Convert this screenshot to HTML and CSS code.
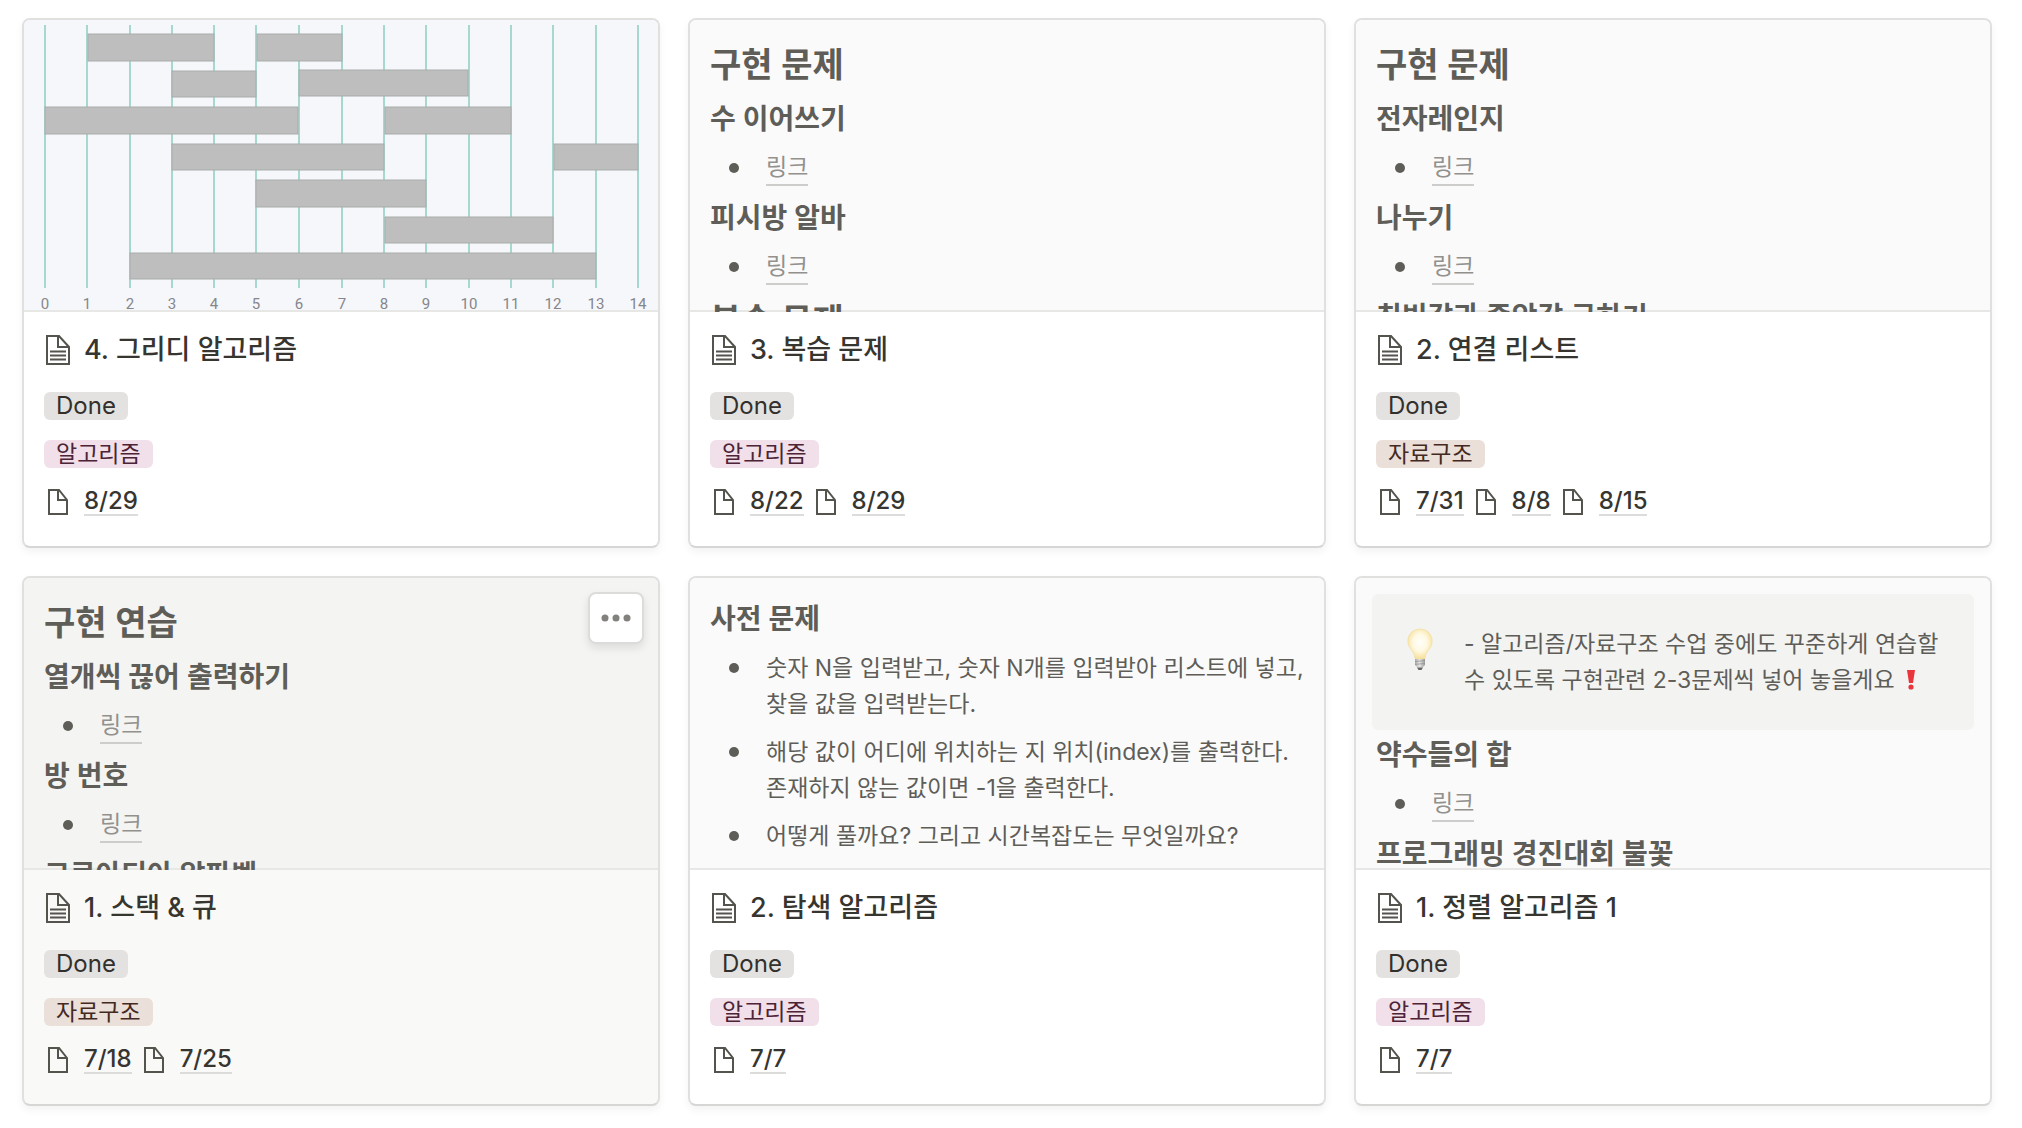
FILE: index.html
```
<!DOCTYPE html>
<html lang="ko">
<head>
    <meta charset="utf-8">
    <title>알고리즘 스터디</title>
    <link rel="stylesheet" href="styles.css">
</head>
<body>
    <!-- Shared icons -->
    <svg class="sprite" aria-hidden="true">
        <symbol id="icon-doc" viewBox="0 0 28 32">
            <path d="M3 2h12l10 11v17H3z M14 2v11h11" fill="none" stroke="#55534e" stroke-width="2"/>
            <path d="M6 17.500h16M6 21.500h16M6 25.500h16" stroke="#55534e" stroke-width="2"/>
        </symbol>
        <symbol id="icon-page" viewBox="0 0 28 28">
            <path d="M5 2h10l8 10v14H5z M14 2v10h9" fill="none" stroke="#55534e" stroke-width="2"/>
        </symbol>
    </svg>

    <main class="gallery">
        <!-- Greedy -->
        <article class="card">
            <div class="cover cover-image">
                <svg class="chart" viewBox="0 0 634 290" preserveAspectRatio="xMidYMin slice" role="img" aria-label="회의 시간표">
                    <g class="chart-lines">
                        <path d="M21 5v263M63 5v263M106 5v263M148 5v263M190 5v263M232 5v263M275 5v263M318 5v263M360 5v263M402 5v263M445 5v263M487 5v263M529 5v263M572 5v263M614 5v263"/>
                    </g>
                    <g class="chart-bars">
                        <rect x="64" y="14" width="126" height="27"/>
                        <rect x="233" y="14" width="85" height="27"/>
                        <rect x="148" y="51" width="84" height="26"/>
                        <rect x="275" y="50" width="169" height="26"/>
                        <rect x="21" y="87" width="253" height="27"/>
                        <rect x="361" y="87" width="126" height="27"/>
                        <rect x="148" y="124" width="212" height="26"/>
                        <rect x="530" y="124" width="84" height="26"/>
                        <rect x="232" y="160" width="170" height="27"/>
                        <rect x="361" y="197" width="168" height="26"/>
                        <rect x="106" y="233" width="466" height="26"/>
                    </g>
                    <g class="chart-labels">
                        <text x="21" y="289">0</text>
                        <text x="63" y="289">1</text>
                        <text x="106" y="289">2</text>
                        <text x="148" y="289">3</text>
                        <text x="190" y="289">4</text>
                        <text x="232" y="289">5</text>
                        <text x="275" y="289">6</text>
                        <text x="318" y="289">7</text>
                        <text x="360" y="289">8</text>
                        <text x="402" y="289">9</text>
                        <text x="445" y="289">10</text>
                        <text x="487" y="289">11</text>
                        <text x="529" y="289">12</text>
                        <text x="572" y="289">13</text>
                        <text x="614" y="289">14</text>
                    </g>
                </svg>
            </div>
            <div class="card-body">
                <div class="title"><svg class="icon-doc"><use href="#icon-doc"/></svg>4. 그리디 알고리즘</div>
                <span class="tag done">Done</span>
                <span class="tag pink">알고리즘</span>
                <div class="pages">
                    <svg class="icon-page"><use href="#icon-page"/></svg><a href="#">8/29</a>
                </div>
            </div>
        </article>

        <!-- Review -->
        <article class="card">
            <div class="cover">
                <h2>구현 문제</h2>
                <h3>수 이어쓰기</h3>
                <ul><li><a href="#">링크</a></li></ul>
                <h3>피시방 알바</h3>
                <ul><li><a href="#">링크</a></li></ul>
                <h2>복습 문제</h2>
            </div>
            <div class="card-body">
                <div class="title"><svg class="icon-doc"><use href="#icon-doc"/></svg>3. 복습 문제</div>
                <span class="tag done">Done</span>
                <span class="tag pink">알고리즘</span>
                <div class="pages">
                    <svg class="icon-page"><use href="#icon-page"/></svg><a href="#">8/22</a>
                    <svg class="icon-page"><use href="#icon-page"/></svg><a href="#">8/29</a>
                </div>
            </div>
        </article>

        <!-- Linked list -->
        <article class="card">
            <div class="cover">
                <h2>구현 문제</h2>
                <h3>전자레인지</h3>
                <ul><li><a href="#">링크</a></li></ul>
                <h3>나누기</h3>
                <ul><li><a href="#">링크</a></li></ul>
                <h3>최빈값과 중앙값 구하기</h3>
            </div>
            <div class="card-body">
                <div class="title"><svg class="icon-doc"><use href="#icon-doc"/></svg>2. 연결 리스트</div>
                <span class="tag done">Done</span>
                <span class="tag brown">자료구조</span>
                <div class="pages">
                    <svg class="icon-page"><use href="#icon-page"/></svg><a href="#">7/31</a>
                    <svg class="icon-page"><use href="#icon-page"/></svg><a href="#">8/8</a>
                    <svg class="icon-page"><use href="#icon-page"/></svg><a href="#">8/15</a>
                </div>
            </div>
        </article>

        <!-- Stack and queue, shown in its hovered state -->
        <article class="card active">
            <button class="more" type="button" aria-label="더 보기">
                <svg viewBox="0 0 30 8" width="30" height="8"><circle cx="4" cy="4" r="3.500"/><circle cx="15" cy="4" r="3.500"/><circle cx="26" cy="4" r="3.500"/></svg>
            </button>
            <div class="cover">
                <h2>구현 연습</h2>
                <h3>열개씩 끊어 출력하기</h3>
                <ul><li><a href="#">링크</a></li></ul>
                <h3>방 번호</h3>
                <ul><li><a href="#">링크</a></li></ul>
                <h3>크로아티아 알파벳</h3>
            </div>
            <div class="card-body">
                <div class="title"><svg class="icon-doc"><use href="#icon-doc"/></svg>1. 스택 &amp; 큐</div>
                <span class="tag done">Done</span>
                <span class="tag brown">자료구조</span>
                <div class="pages">
                    <svg class="icon-page"><use href="#icon-page"/></svg><a href="#">7/18</a>
                    <svg class="icon-page"><use href="#icon-page"/></svg><a href="#">7/25</a>
                </div>
            </div>
        </article>

        <!-- Search -->
        <article class="card">
            <div class="cover">
                <h3>사전 문제</h3>
                <ul>
                    <li>숫자 N을 입력받고, 숫자 N개를 입력받아 리스트에 넣고, 찾을 값을 입력받는다.</li>
                    <li>해당 값이 어디에 위치하는 지 위치(index)를 출력한다. 존재하지 않는 값이면 -1을 출력한다.</li>
                    <li>어떻게 풀까요? 그리고 시간복잡도는 무엇일까요?</li>
                </ul>
            </div>
            <div class="card-body">
                <div class="title"><svg class="icon-doc"><use href="#icon-doc"/></svg>2. 탐색 알고리즘</div>
                <span class="tag done">Done</span>
                <span class="tag pink">알고리즘</span>
                <div class="pages">
                    <svg class="icon-page"><use href="#icon-page"/></svg><a href="#">7/7</a>
                </div>
            </div>
        </article>

        <!-- Sorting -->
        <article class="card">
            <div class="cover">
                <div class="callout">
                    <svg class="bulb" viewBox="0 0 28 44" aria-hidden="true">
                        <defs>
                            <radialGradient id="glow" cx="50%" cy="45%" r="58%">
                                <stop offset="0" stop-color="#fffefa"/>
                                <stop offset="0.5" stop-color="#fff9e2"/>
                                <stop offset="1" stop-color="#f5dc90"/>
                            </radialGradient>
                            <linearGradient id="metal">
                                <stop offset="0" stop-color="#a9a9a7"/>
                                <stop offset="0.45" stop-color="#e6e6e4"/>
                                <stop offset="1" stop-color="#9b9b99"/>
                            </linearGradient>
                        </defs>
                        <path d="M14 1C7 1 1.800 6.200 1.800 13.200c0 6.800 5.400 9.300 6.600 14.300l.8 3.500h9.600l.8-3.500c1.200-5 6.600-7.500 6.600-14.300C26.200 6.200 21 1 14 1z" fill="url(#glow)" stroke="#f0dca0" stroke-width="0.6"/>
                        <path d="M9 31h10v6l-2.500 2.500h-5L9 37z" fill="url(#metal)"/>
                        <path d="M9 33.500l10-.8M9 36.300l10-.8" stroke="#8d8d8b" stroke-width="0.7"/>
                        <path d="M11 39.500h6L15.500 42h-3z" fill="#666"/>
                    </svg>
                    <p>- 알고리즘/자료구조 수업 중에도 꾸준하게 연습할 수 있도록 구현관련 2-3문제씩 넣어 놓을게요 <svg class="bang" viewBox="0 0 20 20" role="img" aria-label="느낌표"><path d="M6 0h8l-2 13H8z" fill="#e9363c"/><circle cx="10" cy="17" r="2.600" fill="#e9363c"/></svg></p>
                </div>
                <h3>약수들의 합</h3>
                <ul><li><a href="#">링크</a></li></ul>
                <h3>프로그래밍 경진대회 불꽃</h3>
            </div>
            <div class="card-body">
                <div class="title"><svg class="icon-doc"><use href="#icon-doc"/></svg>1. 정렬 알고리즘 1</div>
                <span class="tag done">Done</span>
                <span class="tag pink">알고리즘</span>
                <div class="pages">
                    <svg class="icon-page"><use href="#icon-page"/></svg><a href="#">7/7</a>
                </div>
            </div>
        </article>
    </main>
</body>
</html>
```

FILE: styles.css
```
* {
    box-sizing: border-box;
    margin: 0;
    padding: 0;
}

body {
    font-family: Inter, "Noto Sans CJK KR", sans-serif;
    background: #fff;
    color: #37352f;
}

.sprite {
    display: none;
}

.gallery {
    display: grid;
    grid-template-columns: repeat(3, 1fr);
    gap: 28px;
    padding: 18px 30px 22px 22px;
}

/* Card */
.card {
    position: relative;
    overflow: hidden;
    background: #fff;
    border: 2px solid #e0e0df;
    border-bottom-color: #d6d6d5;
    border-radius: 8px;
    box-shadow: 0 4px 8px rgba(15, 15, 15, 0.05);
}

.card.active {
    background: #f9f9f8;
}

/* Page preview at the top of a card */
.cover {
    height: 292px;
    overflow: hidden;
    padding: 16px 20px 0;
    background: #fafafa;
    box-shadow: inset 0 -2px #e7e7e6;
    color: #5e5d58;
}

.active .cover {
    background: #f4f4f2;
}

.cover-image {
    padding: 0;
}

.cover h2 {
    font-size: 34px;
    line-height: 58px;
    font-weight: 600;
}

.cover h3 {
    font-size: 28px;
    line-height: 50px;
    font-weight: 600;
}

.cover ul {
    list-style: none;
    margin-bottom: 1px;
}

.cover li {
    display: flex;
    padding: 6px 0;
    font-size: 23px;
    line-height: 36px;
}

.cover li::before {
    content: "";
    flex: none;
    width: 10px;
    height: 10px;
    margin: 13px 27px 0 19px;
    border-radius: 50%;
    background: #5e5d58;
}

.cover a {
    color: #92918e;
    text-decoration: none;
    border-bottom: 2px solid #cdcdcc;
    line-height: 34px;
}

/* Chart cover */
.chart {
    display: block;
    width: 100%;
    height: 290px;
    background: #f6f7fb;
}

.chart-lines {
    stroke: #a6d8cf;
    stroke-width: 2;
}

.chart-bars {
    fill: #bebebe;
    stroke: #a9abab;
    stroke-width: 1;
}

.chart-labels {
    font-family: Roboto, sans-serif;
    font-size: 15px;
    fill: #85868b;
    text-anchor: middle;
}

/* Callout */
.callout {
    display: flex;
    gap: 30px;
    margin: 0 -4px;
    padding: 32px 24px 32px 34px;
    border-radius: 6px;
    background: #f3f3f1;
    font-size: 23px;
    line-height: 36px;
}

.bulb {
    flex: none;
    width: 28px;
    height: 44px;
    margin-top: 2px;
}

.bang {
    width: 20px;
    height: 20px;
    vertical-align: -2px;
}

/* Properties under the cover */
.card-body {
    display: flex;
    flex-direction: column;
    align-items: flex-start;
    gap: 20px;
    padding: 16px 20px 30px;
}

.title {
    display: flex;
    align-items: center;
    gap: 12px;
    font-size: 27px;
    line-height: 44px;
    font-weight: 500;
}

.icon-doc {
    width: 28px;
    height: 32px;
}

.tag {
    padding: 0 12px;
    border-radius: 6px;
    font-size: 23px;
    line-height: 28px;
}

.done {
    font-size: 24px;
    background: #e3e2e0;
    color: #32302c;
}

.pink {
    background: #f1e0e9;
    color: #4c2337;
}

.brown {
    background: #ebdfd9;
    color: #442a1e;
}

.pages {
    display: flex;
    align-items: center;
    gap: 8px;
    font-size: 24px;
    font-weight: 500;
    line-height: 26px;
}

.pages a {
    margin-left: 4px;
    color: #37352f;
    text-decoration: none;
    border-bottom: 2px solid #dcdcdb;
}

.icon-page {
    width: 28px;
    height: 28px;
}

/* Floating menu button */
.more {
    position: absolute;
    top: 14px;
    right: 14px;
    display: flex;
    align-items: center;
    justify-content: center;
    width: 56px;
    height: 52px;
    border: 2px solid #dcdcdb;
    border-radius: 8px;
    background: #fff;
    box-shadow: 0 4px 8px rgba(15, 15, 15, 0.1);
    fill: #82817d;
    cursor: pointer;
}
```
